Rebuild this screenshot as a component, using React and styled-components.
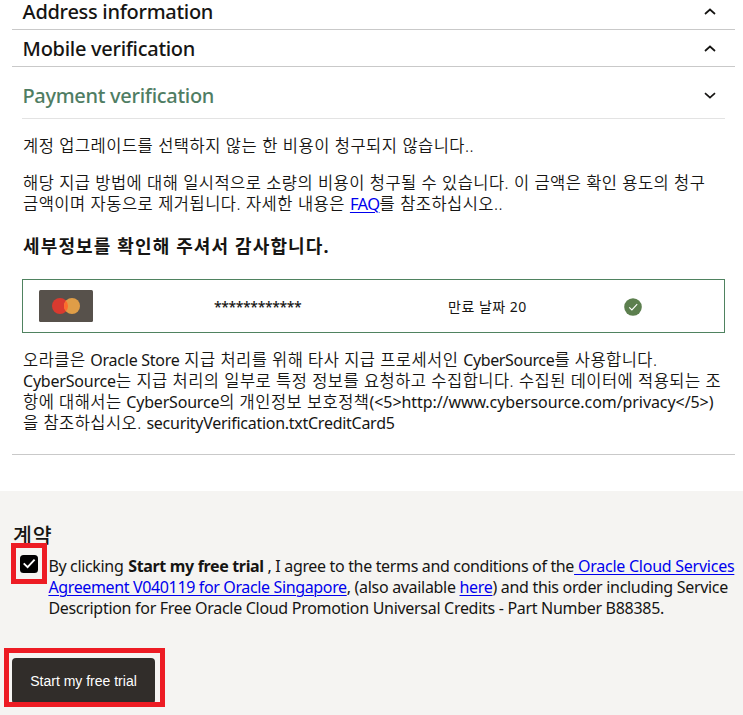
import React from "react";
import styled, { createGlobalStyle } from "styled-components";

const Global = createGlobalStyle`
  *, *::before, *::after { box-sizing: border-box; }
  body {
    margin: 0;
    background: #fff;
    color: #161513;
    font: 400 16px/21px "Noto Sans", "Noto Sans CJK KR", sans-serif;
  }
`;

const Page = styled.div`
  width: 743px;
  height: 715px;
  overflow: hidden;
  display: flex;
  flex-direction: column;
`;

const Accordion = styled.main`
  margin: 0 8px 0 12px;
  height: 455px;
  flex: none;
  border-bottom: 1px solid #c9c9c9;
`;

const SectionHeader = styled.header`
  display: flex;
  align-items: center;
  justify-content: space-between;
  height: ${(p) => p.$height}px;
  padding: ${(p) => p.$top || 0}px 19px ${(p) => p.$bottom || 0}px 10.6px;
  border-bottom: 1px solid #c9c9c9;
`;

const OpenHeader = styled(SectionHeader)`
  margin: 0 10px;
  padding: 6px 9px 0 0.4px;
  border-bottom-color: #e3e3e3;
`;

const SectionTitle = styled.h2`
  margin: 0;
  font-size: 20px;
  font-weight: 500;
  line-height: 22px;
  white-space: nowrap;
  letter-spacing: -0.29px;
  color: ${(p) => (p.$active ? "#4f7d63" : "#161513")};
`;

const Chevron = styled.svg`
  display: block;
  width: 12px;
  height: 8px;
  fill: none;
  stroke: #161513;
  stroke-width: 1.7;
`;

const Body = styled.section`
  padding: 0 10px 0 11px;
`;

const Paragraph = styled.p`
  margin: ${(p) => p.$top}px 0 0;
  font-size: 16.5px;
  font-weight: 350;
  letter-spacing: 0.46px;
`;

const Line = styled.span`
  display: block;
  height: 21px;
  white-space: nowrap;
  word-spacing: ${(p) => p.$word || 0}px;
`;

const Latin = styled.span`
  font-size: 16px;
  font-weight: 400;
  letter-spacing: ${(p) => p.$spacing ?? -0.2}px;
`;

const Link = styled.a`
  color: #0000ee;
  font-weight: 400;
  text-decoration: underline;
  text-decoration-thickness: 1px;
  text-underline-offset: 2px;
  letter-spacing: ${(p) => (p.$spacing === undefined ? "inherit" : `${p.$spacing}px`)};
`;

const SubTitle = styled.h3`
  margin: 21px 0 0;
  font-size: 18px;
  line-height: 22px;
  font-weight: 700;
  letter-spacing: 1.13px;
  white-space: nowrap;
`;

const CardRow = styled.div`
  display: grid;
  grid-template-columns: 175px 234px 176px 1fr;
  align-items: center;
  height: 54px;
  margin: 22px 0 0 -1px;
  padding-left: 16px;
  border: 1px solid #4f8260;
  font-size: 14px;
`;

const CardLogo = styled.svg`
  display: block;
  width: 54px;
  height: 32px;
`;

const CardNumber = styled.span`
  font-weight: 500;
  letter-spacing: -0.4px;
`;

const Expiry = styled.span`
  white-space: nowrap;
  letter-spacing: 0.5px;
`;

const StatusIcon = styled.svg`
  display: block;
  width: 18px;
  height: 18px;
  margin-top: 1px;
`;

const Agreement = styled.footer`
  flex: 1;
  margin-top: 36px;
  padding: 32px 8px 0 12px;
  background: #f5f4f2;
`;

const AgreementTitle = styled.h3`
  margin: 0;
  padding-left: 1px;
  font-size: 20.5px;
  line-height: 24px;
  font-weight: 500;
  letter-spacing: 1px;
`;

const AgreementRow = styled.div`
  display: flex;
  padding: 8px 0 0 8px;
  gap: 10.4px;
`;

const Highlight = styled.div`
  position: absolute;
  inset: ${(p) => p.$inset};
  border: 5px solid #ed1c24;
  pointer-events: none;
`;

const CheckWrap = styled.div`
  position: relative;
  width: 18px;
  height: 18px;
  flex: none;
`;

const CheckBox = styled.svg`
  display: block;
  width: 18px;
  height: 18px;
`;

const Terms = styled.p`
  margin: 1px 0 0;
`;

const TermsLine = styled(Line)`
  letter-spacing: ${(p) => p.$spacing}px;
`;

const Strong = styled.b`
  margin-left: 1px;
  letter-spacing: -0.34px;
`;

const ButtonWrap = styled.div`
  position: relative;
  width: 143px;
  margin-top: 39px;
`;

const StartButton = styled.button`
  display: block;
  width: 143px;
  height: 46px;
  padding: 0;
  border: 0;
  border-radius: 4px;
  background: #312d2a;
  color: #fff;
  font: 14px "Liberation Sans", Arial, sans-serif;
  white-space: nowrap;
`;

function Arrow({ down }) {
  return (
    <Chevron viewBox="0 0 12 8">
      <path d={down ? "M1 1.2L6 5.7L11 1.2" : "M1 6L6 1.5L11 6"} />
    </Chevron>
  );
}

export default function App() {
  return (
    <Page>
      <Global />
      <Accordion>
        <SectionHeader $height={30} $bottom={6}>
          <SectionTitle>Address information</SectionTitle>
          <Arrow />
        </SectionHeader>
        <SectionHeader $height={37} $top={1}>
          <SectionTitle>Mobile verification</SectionTitle>
          <Arrow />
        </SectionHeader>
        <OpenHeader $height={52}>
          <SectionTitle $active>Payment verification</SectionTitle>
          <Arrow down />
        </OpenHeader>
        <Body>
          <Paragraph $top={16}>
            <Line $word={0.3}>계정 업그레이드를 선택하지 않는 한 비용이 청구되지 않습니다..</Line>
          </Paragraph>
          <Paragraph $top={16}>
            <Line $word={0.1}>해당 지급 방법에 대해 일시적으로 소량의 비용이 청구될 수 있습니다. 이 금액은 확인 용도의 청구</Line>
            <Line $word={0.3}>
              금액이며 자동으로 제거됩니다. 자세한 내용은{" "}
              <Link $spacing={-0.6}>FAQ</Link>를 참조하십시오..
            </Line>
          </Paragraph>
          <SubTitle>세부정보를 확인해 주셔서 감사합니다.</SubTitle>
          <CardRow>
            <CardLogo viewBox="0 0 54 32">
              <rect width="54" height="32" rx="1.5" fill="#57514b" />
              <circle cx="21" cy="16" r="8" fill="#d93a2f" />
              <circle cx="33" cy="16" r="8" fill="#df9d47" />
              <path d="M27 10.7a8 8 0 0 1 0 10.6a8 8 0 0 1 0-10.6z" fill="#ff6b2c" />
            </CardLogo>
            <CardNumber>************</CardNumber>
            <Expiry>만료 날짜 20</Expiry>
            <StatusIcon viewBox="0 0 18 18">
              <circle cx="9" cy="9" r="8.8" fill="#5c7f4e" />
              <path d="M5.2 9.3L7.9 11.9L13.2 6.2" fill="none" stroke="#fff" strokeWidth="1.1" />
            </StatusIcon>
          </CardRow>
          <Paragraph $top={16}>
            <Line>
              오라클은 <Latin $spacing={-0.25}>Oracle Store</Latin> 지급 처리를 위해 타사 지급 프로세서인{" "}
              <Latin $spacing={-0.35}>CyberSource</Latin>를 사용합니다.
            </Line>
            <Line $word={0.1}>
              <Latin>CyberSource</Latin>는 지급 처리의 일부로 특정 정보를 요청하고 수집합니다. 수집된 데이터에 적용되는 조
            </Line>
            <Line>
              항에 대해서는 <Latin>CyberSource</Latin>의 개인정보 보호정책
              <Latin $spacing={-0.07}>(&lt;5&gt;http://www.cybersource.com/privacy&lt;/5&gt;)</Latin>
            </Line>
            <Line>
              을 참조하십시오. <Latin $spacing={-0.27}>securityVerification.txtCreditCard5</Latin>
            </Line>
          </Paragraph>
        </Body>
      </Accordion>
      <Agreement>
        <AgreementTitle>계약</AgreementTitle>
        <AgreementRow>
          <CheckWrap>
            <CheckBox viewBox="0 0 18 18">
              <rect width="18" height="18" rx="3.5" fill="#000" />
              <path d="M3.7 8.3L7.6 12.2L14.6 4.7" fill="none" stroke="#fff" strokeWidth="1.9" />
            </CheckBox>
            <Highlight $inset="-12px -9px -11px -9px" />
          </CheckWrap>
          <Terms>
            <TermsLine $spacing={-0.34}>
              By clicking <Strong>Start my free trial</Strong> , I agree to the terms and conditions of the
              <Link $spacing={-0.25}> Oracle Cloud Services</Link>
            </TermsLine>
            <TermsLine $spacing={-0.31}>
              <Link $spacing={-0.36}>Agreement V040119 for Oracle Singapore</Link>, (also available <Link>here</Link>) and this order including Service
            </TermsLine>
            <TermsLine $spacing={-0.3}>
              Description for Free Oracle Cloud Promotion Universal Credits - Part Number B88385.
            </TermsLine>
          </Terms>
        </AgreementRow>
        <ButtonWrap>
          <StartButton>Start my free trial</StartButton>
          <Highlight $inset="-10px -10px -3px -8px" />
        </ButtonWrap>
      </Agreement>
    </Page>
  );
}
